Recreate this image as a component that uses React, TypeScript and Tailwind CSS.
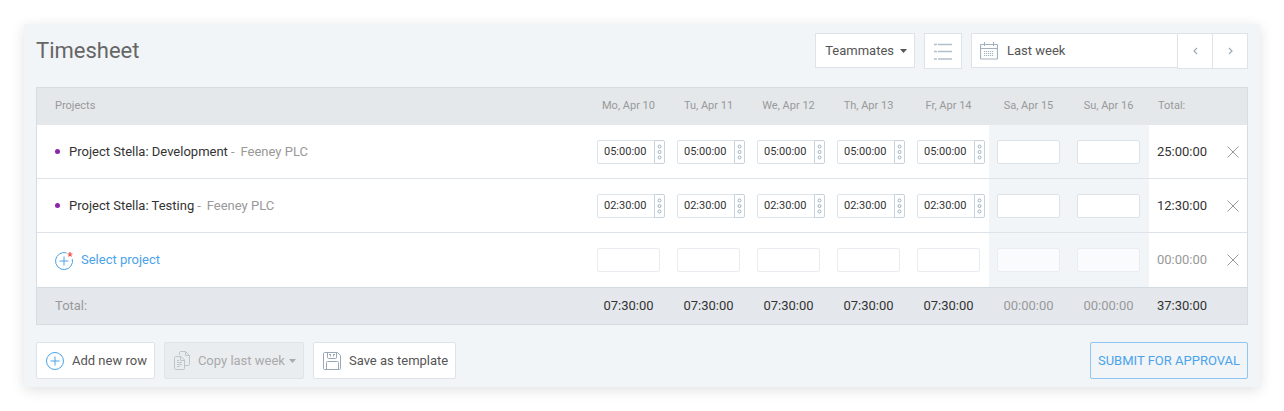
import { clsx } from "clsx";

type Row = {
  id: string;
  project: string;
  client: string;
  hours: string[];
  total: string;
};

const DAYS = ["Mo, Apr 10", "Tu, Apr 11", "We, Apr 12", "Th, Apr 13", "Fr, Apr 14", "Sa, Apr 15", "Su, Apr 16"];

const ROWS: Row[] = [
  {
    id: "development",
    project: "Project Stella: Development",
    client: "Feeney PLC",
    hours: ["05:00:00", "05:00:00", "05:00:00", "05:00:00", "05:00:00", "", ""],
    total: "25:00:00",
  },
  {
    id: "testing",
    project: "Project Stella: Testing",
    client: "Feeney PLC",
    hours: ["02:30:00", "02:30:00", "02:30:00", "02:30:00", "02:30:00", "", ""],
    total: "12:30:00",
  },
];

const DAY_TOTALS = ["07:30:00", "07:30:00", "07:30:00", "07:30:00", "07:30:00", "00:00:00", "00:00:00"];
const EMPTY_TOTAL = "00:00:00";

const isWeekend = (day: number) => day > 4;

function Caret() {
  return (
    <svg width="7" height="4" viewBox="0 0 7 4" fill="currentColor" aria-hidden="true">
      <path d="M0 0h7L3.5 4z" />
    </svg>
  );
}

function ListIcon() {
  return (
    <svg width="18" height="18" viewBox="0 0 18 18" fill="none" stroke="#b4bfca" strokeWidth="1.3" aria-hidden="true">
      <path d="M0 2.5h3M4 2.5h14M0 9.5h3M4 9.5h14M0 17h3M4 17h14" />
    </svg>
  );
}

function CalendarIcon() {
  return (
    <svg width="18" height="18" viewBox="0 0 18 18" fill="none" stroke="#a3b1bf" aria-hidden="true">
      <rect x="0.5" y="2.5" width="17" height="14.500" rx="1" strokeWidth="1.200" />
      <path d="M0.5 6.5h17M4.5 0v4M13.5 0v4" />
      <path d="M4 9.5h10M4 11.5h10M4 13.500h10" strokeDasharray="1.200 0.800" />
    </svg>
  );
}

function Chevron({ direction }: { direction: "left" | "right" }) {
  return (
    <svg width="5" height="8" viewBox="0 0 5 8" fill="none" stroke="#9dabb9" strokeWidth="1.2" aria-hidden="true">
      <path d={direction === "left" ? "M4 1 1 4l3 3" : "M1 1l3 3-3 3"} />
    </svg>
  );
}

function CloseIcon() {
  return (
    <svg width="12" height="12" viewBox="0 0 12 12" fill="none" stroke="#999" aria-hidden="true">
      <path d="M0.5 0.5l11 11M11.5 0.5l-11 11" />
    </svg>
  );
}

function PlusCircleIcon() {
  return (
    <svg width="18" height="18" viewBox="0 0 18 18" fill="none" stroke="#4ba3ea" aria-hidden="true">
      <circle cx="9" cy="9" r="8.5" />
      <path d="M9 4.5v9M4.5 9h9" />
    </svg>
  );
}

/** Plus circle with its top right arc left open for the "required" star. */
function RequiredPlusIcon() {
  return (
    <svg width="19" height="19" viewBox="0 0 19 19" fill="none" stroke="#4ba3ea" aria-hidden="true">
      <path d="M11.5 1.9A8.5 8.5 0 1 0 17.3 8" />
      <path d="M9 5.5v9M4.5 10h9" />
      <path d="M15 3.5V1M15 3.5l2.400-0.800M15 3.5l1.500 2M15 3.5l-1.500 2M15 3.5l-2.400-0.800" stroke="#f0524b" strokeWidth="1.2" />
    </svg>
  );
}

function CopyIcon() {
  return (
    <svg width="16" height="19" viewBox="0 0 16 19" fill="none" stroke="#bcc5ca" aria-hidden="true">
      <path d="M5.5 4V1.5a1 1 0 0 1 1-1h5l4 4v9a1 1 0 0 1-1 1H11M11.5 0.5v4h4" />
      <path d="M1.5 5.5H7l3.5 3.5v8.5a1 1 0 0 1-1 1h-8a1 1 0 0 1-1-1v-11a1 1 0 0 1 1-1z" />
      <path d="M6.5 5.5v4h4M3 9.5h2M3 11.5h5M3 13.5h5M3 15.5h3" />
    </svg>
  );
}

function SaveIcon() {
  return (
    <svg width="18" height="18" viewBox="0 0 18 18" fill="none" stroke="#99a8b8" aria-hidden="true">
      <path d="M1.5 0.5h13l3 3v13a1 1 0 0 1-1 1h-15a1 1 0 0 1-1-1v-15a1 1 0 0 1 1-1z" />
      <path d="M4.5 0.5v5a1 1 0 0 0 1 1h7a1 1 0 0 0 1-1v-5M3.5 17.5v-7a1 1 0 0 1 1-1h10a1 1 0 0 1 1 1v7" />
      <path d="M7.5 2v2.5M10.5 2v2.5M6 2.5h2M10 2.5h2" />
    </svg>
  );
}

function TimeCell({ label, value, weekend, disabled }: { label: string; value: string; weekend: boolean; disabled?: boolean }) {
  return (
    <td className={clsx("border-b border-[#dee3e9] pl-2", weekend && "bg-[#f1f5f8]")}>
      <div className="flex h-6">
        <input
          aria-label={label}
          defaultValue={value}
          disabled={disabled}
          className={clsx(
            "h-6 min-w-0 border px-1.5 text-[11px] text-[#333]",
            value ? "w-[58px] rounded-l-xs" : "w-[63px] rounded-xs",
            disabled ? "border-[#e9ecf0]" : "border-[#dce3e9]",
            disabled && weekend ? "bg-[#fafbfd]" : "bg-white",
          )}
        />
        {value && (
          <button
            type="button"
            aria-label={`${label} details`}
            className="-ml-px flex w-[11px] items-center justify-center rounded-r-xs border border-[#c6d2dc] bg-white"
          >
            <svg width="5" height="16" viewBox="0 0 5 16" fill="none" stroke="#9dafc0" aria-hidden="true">
              <circle cx="2.5" cy="2.5" r="1.5" />
              <circle cx="2.5" cy="8" r="1.5" />
              <circle cx="2.5" cy="13.5" r="1.5" />
            </svg>
          </button>
        )}
      </div>
    </td>
  );
}

function RemoveCell({ label }: { label: string }) {
  return (
    <td className="border-b border-[#dee3e9]">
      <button type="button" aria-label={label} className="ml-[9px] flex">
        <CloseIcon />
      </button>
    </td>
  );
}

function Toolbar() {
  return (
    <header className="flex items-start justify-between">
      <h1 className="text-[22px] leading-9 text-[#666]">Timesheet</h1>
      <div className="flex gap-[9px] text-[13px] text-[#555]">
        <button type="button" className="flex h-[35px] items-center gap-1.5 border border-[#dee3e9] bg-white pr-[7px] pl-[9px]">
          Teammates
          <Caret />
        </button>
        <button type="button" aria-label="List view" className="flex h-9 w-[38px] items-center justify-center border border-[#dee3e9] bg-white">
          <ListIcon />
        </button>
        <div className="flex">
          <button type="button" className="flex h-[35px] w-[207px] items-center gap-[9px] border border-[#dee3e9] bg-white px-2">
            <CalendarIcon />
            Last week
          </button>
          <button type="button" aria-label="Previous week" className="-ml-px flex h-9 w-9 items-center justify-center border border-[#dee3e9] bg-white">
            <Chevron direction="left" />
          </button>
          <button type="button" aria-label="Next week" className="-ml-px flex h-9 w-9 items-center justify-center border border-[#dee3e9] bg-white">
            <Chevron direction="right" />
          </button>
        </div>
      </div>
    </header>
  );
}

function TimesheetTable() {
  return (
    <div className="mt-[18px] border border-[#d6dce1] bg-white">
      <table className="w-full table-fixed border-separate border-spacing-0 text-left text-[13px] text-[#333]">
        <colgroup>
          <col />
          {DAYS.map((day) => (
            <col key={day} className="w-20" />
          ))}
          <col className="w-[69px]" />
          <col className="w-[29px]" />
        </colgroup>
        <thead>
          <tr className="h-[37px] bg-[#e4e8eb] text-[11px] text-[#999]">
            <th className="pl-[18px] font-normal">Projects</th>
            {DAYS.map((day) => (
              <th key={day} className="pr-[9px] pl-2 text-center font-normal whitespace-nowrap">
                {day}
              </th>
            ))}
            <th className="pl-[9px] font-normal">Total:</th>
            <td />
          </tr>
        </thead>
        <tbody>
          {ROWS.map((row) => (
            <tr key={row.id} className="h-[54px]">
              <th className="border-b border-[#dee3e9] pl-[18px] font-normal">
                <div className="flex items-center">
                  <span className="mr-[9px] size-[5px] rounded-full bg-[#8e24aa]" />
                  <span>{row.project}</span>
                  <span className="ml-[3px] text-[#999]">-</span>
                  <span className="ml-1.5 text-[#999]">{row.client}</span>
                </div>
              </th>
              {row.hours.map((value, i) => (
                <TimeCell key={DAYS[i]} label={`${row.project}, ${DAYS[i]}`} value={value} weekend={isWeekend(i)} />
              ))}
              <td className="border-b border-[#dee3e9] pl-2">{row.total}</td>
              <RemoveCell label={`Remove ${row.project}`} />
            </tr>
          ))}
          <tr className="h-[54px] text-[#999] *:border-b-0">
            <td className="pl-[18px]">
              <button type="button" className="flex items-center gap-[7px] text-[#4ba3ea]">
                <RequiredPlusIcon />
                Select project
              </button>
            </td>
            {DAYS.map((day, i) => (
              <TimeCell key={day} label={`New row, ${day}`} value="" weekend={isWeekend(i)} disabled />
            ))}
            <td className="pl-2">{EMPTY_TOTAL}</td>
            <RemoveCell label="Remove new row" />
          </tr>
        </tbody>
        <tfoot>
          <tr className="h-[37px] bg-[#e4e8ed] *:border-t *:border-[#d3dbe1]">
            <th className="pl-[18px] font-normal text-[#999]">Total:</th>
            {DAY_TOTALS.map((total, i) => (
              <td key={DAYS[i]} className={clsx("pr-[9px] pl-2 text-center", isWeekend(i) && "text-[#999]")}>
                {total}
              </td>
            ))}
            <td className="pl-2">37:30:00</td>
            <td />
          </tr>
        </tfoot>
      </table>
    </div>
  );
}

function Actions() {
  return (
    <footer className="mt-[17px] flex h-[37px] gap-[9px] text-[13px] text-[#555]">
      <button type="button" className="flex items-center gap-2 rounded-xs border border-[#dee3e9] bg-white pr-[7px] pl-[9px]">
        <PlusCircleIcon />
        Add new row
      </button>
      <button type="button" disabled className="flex items-center gap-2 rounded-xs border border-[#dfe4e8] bg-[#e9edf0] pr-[7px] pl-[9px] text-[#aaa]">
        <CopyIcon />
        <span className="flex items-center gap-1">
          Copy last week
          <Caret />
        </span>
      </button>
      <button type="button" className="flex items-center gap-2 rounded-xs border border-[#dee3e9] bg-white pr-[7px] pl-[9px]">
        <SaveIcon />
        Save as template
      </button>
      <button type="button" className="ml-auto rounded-xs border border-[#8fc6f3] px-[7px] text-[#4ba3ea]">
        SUBMIT FOR APPROVAL
      </button>
    </footer>
  );
}

export default function App() {
  return (
    <div className="bg-white p-6 font-[Roboto,sans-serif]">
      <main className="rounded-xs bg-[#f1f5f8] px-3 pt-[9px] pb-2 shadow-[0_3px_14px_rgba(0,0,0,0.12)]">
        <Toolbar />
        <TimesheetTable />
        <Actions />
      </main>
    </div>
  );
}
